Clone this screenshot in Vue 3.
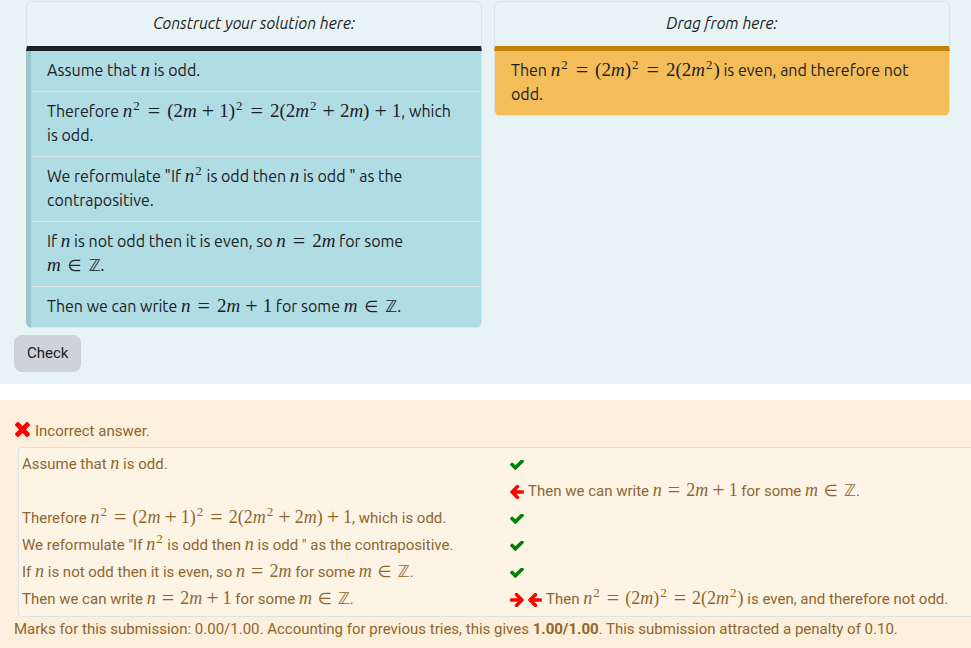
<script setup>
import { h } from 'vue'

const steps = [
  'Assume that $n$ is odd.',
  'Therefore $n^2 = (2m + 1)^2 = 2(2m^2 + 2m) + 1$, which is odd.',
  'We reformulate "If $n^2$ is odd then $n$ is odd " as the contrapositive.',
  'If $n$ is not odd then it is even, so $n = 2m$ for some $m ∈ ℤ$.',
  'Then we can write $n = 2m + 1$ for some $m ∈ ℤ$.',
]
const unused = ['Then $n^2 = (2m)^2 = 2(2m^2)$ is even, and therefore not odd.']

const feedback = [
  { answer: steps[0], icons: ['check'] },
  { answer: '', icons: ['left'], note: steps[4] },
  { answer: steps[1], icons: ['check'] },
  { answer: steps[2], icons: ['check'] },
  { answer: steps[3], icons: ['check'] },
  { answer: steps[4], icons: ['right', 'left'], note: unused[0] },
]

// Turns one formula token into its element.
function token(t) {
  if (t[0] === '^') return h('sup', t.slice(1))
  if (/^[a-z]$/.test(t)) return h('i', t)
  if (t === '+') return h('span', { class: 'op plus' }, t)
  if (t === '=') return h('span', { class: 'op rel' }, t)
  if (t === '∈') return h('span', { class: 'sym rel' }, t)
  if (t === 'ℤ') return h('span', { class: 'sym' }, t)
  return t
}

// Text with inline formulas between dollar signs.
const MathText = ({ text }) =>
  h('span', text.split('$').map((part, i) =>
    i % 2 ? h('span', { class: 'math' }, part.match(/\^\d|[()\d]+|\S/g).map(token)) : part))
MathText.props = ['text']

const arrow = 'M1664 896v128q0 53-32.5 90.5t-84.5 37.5h-704l293 294q38 36 38 90t-38 90l-75 76q-37 37-90 37-52 0-91-37l-651-652q-37-37-37-90 0-52 37-91l651-650q38-38 91-38 52 0 90 38l75 74q38 38 38 91t-38 91l-293 293h704q52 0 84.5 37.5t32.5 90.5z'
const shapes = {
  check: { box: '121 434 1550 1088', d: 'M1671 566q0 40-28 68l-724 724-136 136q-28 28-68 28t-68-28l-136-136-362-362q-28-28-28-68t28-68l136-136q28-28 68-28t68 28l294 295 656-657q28-28 68-28t68 28l136 136q28 28 28 68z' },
  left: { box: '192 216 1472 1488', d: arrow },
  right: { box: '192 216 1472 1488', d: arrow },
}
</script>

<template>
  <main class="page">
    <section class="question">
      <div class="columns">
        <div class="list used">
          <h2>Construct your solution here:</h2>
          <ul>
            <li v-for="s in steps" :key="s"><MathText :text="s" /></li>
          </ul>
        </div>
        <div class="list available">
          <h2>Drag from here:</h2>
          <ul>
            <li v-for="s in unused" :key="s"><MathText :text="s" /></li>
          </ul>
        </div>
      </div>
      <button type="button" class="check-button">Check</button>
    </section>

    <section class="outcome">
      <p class="verdict">
        <svg class="cross" viewBox="302 366 1188 1188" aria-hidden="true"><path d="M1490 1322q0 40-28 68l-136 136q-28 28-68 28t-68-28l-294-294-294 294q-28 28-68 28t-68-28l-136-136q-28-28-28-68t28-68l294-294-294-294q-28-28-28-68t28-68l136-136q28-28 68-28t68 28l294 294 294-294q28-28 68-28t68 28l136 136q28 28 28 68t-28 68l-294 294 294 294q28 28 28 68z" /></svg>
        <span>Incorrect answer.</span>
      </p>
      <div class="panel">
        <table>
          <tbody>
            <tr v-for="(row, i) in feedback" :key="i">
              <td><MathText :text="row.answer" /></td>
              <td>
                <div class="mark">
                  <svg v-for="name in row.icons" :key="name" :class="['icon', name]" :viewBox="shapes[name].box" aria-hidden="true"><path :d="shapes[name].d" /></svg>
                  <MathText v-if="row.note" :text="row.note" />
                </div>
              </td>
            </tr>
          </tbody>
        </table>
      </div>
      <p class="marks">Marks for this submission: 0.00/1.00. Accounting for previous tries, this gives <b>1.00/1.00</b>. This submission attracted a penalty of 0.10.</p>
    </section>
  </main>
</template>

<style>
body {
  margin: 0;
  background: #fff;
}
.math {
  font-family: "Liberation Serif", serif;
  font-size: var(--math-size);
  line-height: 1;
  white-space: nowrap;
}
.math sup {
  font-size: 13px;
  line-height: 0;
  vertical-align: 7px;
  margin: 0 1px;
}
.math .op {
  font-size: 22px;
  line-height: 0;
  vertical-align: -1px;
}
.math .sym {
  font-family: "DejaVu Sans", sans-serif;
  font-size: 16px;
}
.math .plus {
  margin: 0 var(--plus-gap);
}
.math .rel {
  margin: 0 var(--rel-gap);
}
</style>

<style scoped>
.page {
  overflow: hidden;
  font-family: Roboto, sans-serif;
  font-size: 15px;
}
.question {
  --math-size: 19px;
  --plus-gap: 5px;
  --rel-gap: 7px;
  padding: 1px 0 12px;
  background: #e7f3f5;
  color: #1d2125;
}
.columns {
  display: grid;
  grid-template-columns: 1fr 1fr;
  align-items: start;
  gap: 12px;
  padding: 0 21px 0 26px;
  font-family: Ubuntu, "Noto Sans", sans-serif;
  font-size: 16px;
}
h2 {
  margin: 0;
  padding: 9px 16px 11px;
  border: 1px solid #dee2e6;
  border-bottom: 5px solid #1d2125;
  border-radius: 6px 6px 0 0;
  font-size: 16px;
  font-weight: 400;
  font-style: italic;
  line-height: 24px;
  text-align: center;
}
ul {
  list-style: none;
  margin: 0;
  padding: 0;
  border: 1px solid #dee2e6;
  border-width: 0 1px;
  border-radius: 0 0 6px 6px;
  overflow: hidden;
}
.used ul {
  border-left: 5px solid #9bc7ce;
  background: #b0dce3;
}
.available h2 {
  border-bottom-color: #c4820b;
}
.available ul {
  background: #f3be59;
}
li {
  padding: 7px 20px 9px 16px;
  border-bottom: 1px solid #dee2e6;
  line-height: 24px;
}
.check-button {
  display: block;
  margin: 7px 0 0 14px;
  padding: 6px 13px;
  border: 0;
  border-radius: 8px;
  background: #ced2da;
  color: #1d2125;
  font-family: Roboto, sans-serif;
  font-size: 15px;
  line-height: 25px;
}
.outcome {
  --math-size: 18px;
  --plus-gap: 4px;
  --rel-gap: 6px;
  margin-top: 16px;
  padding: 19px 0 8px;
  background: #fcefdc;
  color: #8e662e;
}
.verdict {
  display: flex;
  align-items: center;
  gap: 5px;
  margin: 0;
  padding: 0 0 4px 15px;
  line-height: 24px;
}
.cross {
  width: 15px;
  height: 15px;
  margin-bottom: 4px;
  fill: #f00;
}
.panel {
  margin: 0 -12px 0 18px;
  padding: 3px;
  border: 1px solid #dee2e6;
  border-radius: 4px;
  background: #fdf4e6;
}
table {
  width: 100%;
  border-collapse: collapse;
  table-layout: fixed;
}
td {
  height: 27px;
  padding: 0;
  line-height: 27px;
  white-space: nowrap;
}
td:first-child {
  width: 51%;
}
.mark {
  display: flex;
  align-items: center;
  gap: 4px;
}
.icon {
  width: 14px;
  height: 14px;
  fill: #f00;
}
.icon.check {
  height: 10px;
  fill: #008000;
}
.icon.right {
  transform: scaleX(-1);
}
.marks {
  margin: 0;
  padding: 0 14px;
  line-height: 25px;
}
</style>
